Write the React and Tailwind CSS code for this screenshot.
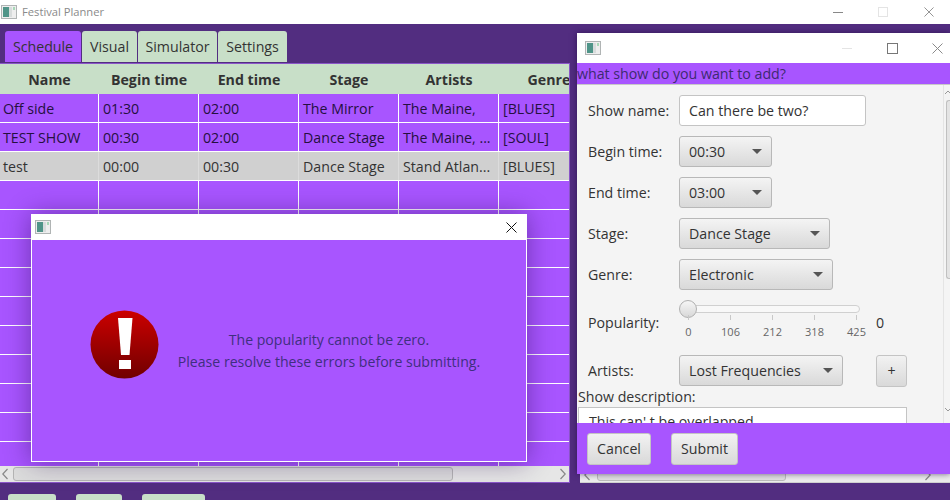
const columns = ["Name", "Begin time", "End time", "Stage", "Artists", "Genre"];

const rows = [
  ["Off side", "01:30", "02:00", "The Mirror", "The Maine,", "[BLUES]"],
  ["TEST SHOW", "00:30", "02:00", "Dance Stage", "The Maine, ...", "[SOUL]"],
  ["test", "00:00", "00:30", "Dance Stage", "Stand Atlan...", "[BLUES]"],
  ...Array.from({ length: 10 }, () => ["", "", "", "", "", ""]),
];

const tabs = [
  { label: "Schedule", width: "w-[76px]", active: true },
  { label: "Visual", width: "w-[55px]" },
  { label: "Simulator", width: "w-[79px]" },
  { label: "Settings", width: "w-[69px]" },
];

const AppIcon = () => (
  <svg width="16" height="14" viewBox="0 0 16 14" className="shrink-0">
    <rect x="0.5" y="0.5" width="15" height="13" fill="#eeeeee" stroke="#b0b4b4" />
    <rect x="2" y="2" width="6" height="10" fill="#4f9488" />
    <rect x="8" y="2" width="3" height="10" fill="#d8dcdc" />
    <rect x="12" y="2" width="2" height="3" fill="#a8d8b8" />
  </svg>
);

const CloseIcon = ({ color = "#8a8a8a", size = 11 }) => (
  <svg width={size} height={size} viewBox="0 0 11 11" fill="none" stroke={color} strokeWidth="1">
    <path d="M0.5 0.5 10.5 10.5M10.5 0.5 0.5 10.5" />
  </svg>
);

const Arrow = () => (
  <svg width="10" height="5" viewBox="0 0 10 5" className="shrink-0">
    <path d="M0 0h10L5 5z" fill="#555555" />
  </svg>
);

const Select = ({ value, width }) => (
  <div className={`${width} h-[31px] flex items-center justify-between pl-[9px] pr-[9px] border border-[#b8b8b8] rounded-[3px] bg-linear-to-b from-[#f4f4f4] to-[#d9d9d9] text-[#333333]`}>
    <span>{value}</span>
    <Arrow />
  </div>
);

const FormRow = ({ label, children }) => (
  <div className="flex items-center h-[31px]">
    <span className="w-[92px] shrink-0 pl-[1px] text-[#333333]">{label}</span>
    {children}
  </div>
);

const Chevron = ({ dir }) => (
  <svg width="6" height="12" viewBox="0 0 6 12" fill="none" stroke="#888888" strokeWidth="1.2">
    <path d={dir === "left" ? "M5.5 1 .8 6l4.7 5" : "M.5 1l4.7 5-4.7 5"} />
  </svg>
);

const Button = ({ children, width }) => (
  <div className={`${width} h-[32px] flex items-center justify-center border border-[#c4c4c4] rounded-[3px] bg-linear-to-b from-[#f2f2f2] to-[#d9d9d9] text-[#333333]`}>
    {children}
  </div>
);

const Slider = () => (
  <div className="relative w-[190px] h-[45px]">
    <div className="absolute left-[1px] top-[5px] w-[180px] h-[8px] rounded-full border border-[#d0d0d0] bg-[#f8f8f8]" />
    <div className="absolute left-0 top-0 w-[18px] h-[18px] rounded-full border border-[#b0b0b0] bg-linear-to-b from-[#f6f6f6] to-[#d8d8d8]" />
    <div className="absolute left-[9px] top-[15px] w-[169px] flex justify-between">
      {["0", "106", "212", "318", "425"].map((tick) => (
        <div key={tick} className="relative w-px h-[5px] bg-[#c8c8c8]">
          <span className="absolute top-[10px] left-1/2 -translate-x-1/2 text-[11px] leading-[14px] text-[#666666]">{tick}</span>
        </div>
      ))}
    </div>
    <span className="absolute left-[197px] top-[12px] text-[#333333]">0</span>
  </div>
);

const ScheduleTable = () => (
  <div className="relative h-[403px] w-[570px] shrink-0 overflow-hidden border-t border-r border-[#8a55c8] bg-[#a855ff]">
    <div className="flex w-[600px] h-[30px] bg-[#c8dfc8]">
      {columns.map((col, j) => (
        <div key={col} className={`${j === 0 ? "w-[99px]" : "w-[100px]"} pt-[1px] flex items-center justify-center font-bold text-[#333333]`}>{col}</div>
      ))}
    </div>
    {rows.map((row, i) => (
      <div key={i} className={`flex w-[600px] h-[29px] border-b border-white ${i === 2 ? "bg-[#d0d0d0] text-[#333333]" : "text-[#25103f]"}`}>
        {row.map((cell, j) => (
          <div key={j} className={`${j === 0 ? "w-[99px] pl-[3px]" : "w-[100px] pl-[4px]"} pt-[1px] flex items-center whitespace-nowrap border-r ${i === 2 ? "border-[#dcdcdc]" : "border-white"}`}>{cell}</div>
        ))}
      </div>
    ))}
  </div>
);

const HScroll = () => (
  <div className="h-[17px] w-[570px] shrink-0 flex items-center bg-[#e6e6e6] border-r border-b border-[#8a55c8] pr-[3px] pl-[2px]">
    <Chevron dir="left" />
    <div className="ml-[5px] w-[440px] h-[14px] rounded-[3px] border border-[#b4b4b4] bg-[#dcdcdc]" />
    <div className="flex-1" />
    <Chevron dir="right" />
  </div>
);

const ErrorIcon = () => (
  <svg width="69" height="69" viewBox="0 0 69 69" className="shrink-0">
    <defs>
      <linearGradient id="err" x1="0" y1="0" x2="0" y2="1">
        <stop offset="0" stopColor="#cc0000" />
        <stop offset="1" stopColor="#700000" />
      </linearGradient>
    </defs>
    <circle cx="34.5" cy="34.5" r="34" fill="url(#err)" />
    <path d="M28 8h14.500l-3 37h-8.500z" fill="#ffffff" />
    <rect x="29" y="50" width="12" height="9" fill="#ffffff" />
  </svg>
);

const ErrorDialog = () => (
  <div className="absolute left-[31px] top-[214px] w-[496px] h-[248px] flex flex-col shadow-[0_0_24px_rgba(40,10,80,0.45)]">
    <div className="h-[26px] bg-white flex items-center justify-between pl-[4px] pr-[10px]">
      <AppIcon />
      <CloseIcon color="#111111" />
    </div>
    <div className="flex-1 flex items-center pl-[58px] pr-[27px] pb-[12px] bg-[#a855ff] border border-t-0 border-white">
      <ErrorIcon />
      <div className="flex-1 pt-[12px] text-center leading-[22px] text-[14.1px] text-[#3f2f80]">
        <p>The popularity cannot be zero.</p>
        <p>Please resolve these errors before submitting.</p>
      </div>
    </div>
  </div>
);

const AddShowWindow = () => (
  <div className="absolute left-[577px] top-[33px] w-[373px] h-[441px] flex flex-col shadow-[0_0_6px_rgba(30,10,60,0.6)]">
    <div className="h-[30px] shrink-0 bg-white flex items-center pl-[8px] pr-[7px]">
      <AppIcon />
      <div className="flex-1" />
      <div className="w-[10px] h-px bg-[#e4e4e4] mr-[35px]" />
      <div className="w-[11px] h-[11px] border border-[#777777] mr-[34px]" />
      <CloseIcon size={11} />
    </div>
    <div className="h-[21px] shrink-0 bg-[#a855ff] flex items-center whitespace-nowrap text-[#3d2a70]">what show do you want to add?</div>
    <div className="relative flex-1 min-h-0 overflow-hidden bg-[#f4f4f4] border-t border-[#c8c8c8]">
      <div className="flex flex-col gap-[10px] pt-[10px] pl-[10px]">
        <FormRow label="Show name:">
          <div className="w-[187px] h-[31px] flex items-center pl-[9px] border border-[#c4c4c4] rounded-[3px] bg-white text-[#333333]">Can there be two?</div>
        </FormRow>
        <FormRow label="Begin time:"><Select value="00:30" width="w-[93px]" /></FormRow>
        <FormRow label="End time:"><Select value="03:00" width="w-[93px]" /></FormRow>
        <FormRow label="Stage:"><Select value="Dance Stage" width="w-[151px]" /></FormRow>
        <FormRow label="Genre:"><Select value="Electronic" width="w-[154px]" /></FormRow>
        <div className="flex items-center h-[45px]">
          <span className="w-[92px] shrink-0 pl-[1px] text-[#333333]">Popularity:</span>
          <Slider />
        </div>
        <div className="flex items-center h-[31px]">
          <span className="w-[92px] shrink-0 pl-[1px] text-[#333333]">Artists:</span>
          <Select value="Lost Frequencies" width="w-[164px]" />
          <div className="ml-[33px]"><Button width="w-[31px]">+</Button></div>
        </div>
      </div>
      <div className="pl-[1px] leading-[21px] text-[#333333]">Show description:</div>
      <div className="ml-[1px] w-[329px] h-[40px] pl-[10px] pt-[3px] border border-[#c4c4c4] bg-white text-[#333333]">This can' t be overlapped</div>
      {/* vertical scrollbar on the right edge of the form */}
      <div className="absolute right-0 top-0 bottom-0 w-[7px] flex flex-col items-end border-l border-[#e4e4e4]">
        <svg width="6" height="15" viewBox="0 0 6 15" fill="none" stroke="#999999" strokeWidth="1">
          <path d="M1 9l3-3 2 2" />
        </svg>
        <div className="w-[4px] h-[179px] rounded-l-[3px] border border-r-0 border-[#c0c0c0] bg-[#e4e4e4]" />
        <div className="flex-1" />
        <svg width="6" height="15" viewBox="0 0 6 15" fill="none" stroke="#999999" strokeWidth="1">
          <path d="M1 2l3 3 2-2" />
        </svg>
        <div className="h-[2px]" />
      </div>
    </div>
    <div className="h-[51px] shrink-0 bg-[#a855ff] flex items-center gap-[20px] pl-[10px]">
      <Button width="w-[64px]">Cancel</Button>
      <Button width="w-[67px]">Submit</Button>
    </div>
  </div>
);

const App = () => {
  return (
    <div className="relative w-[950px] h-[500px] overflow-hidden flex flex-col bg-[#522d80] text-[14.2px] font-['Open_Sans',sans-serif]">
      <div className="h-[24px] shrink-0 bg-white flex items-center pl-[1px] pr-[16px]">
        <AppIcon />
        <span className="ml-[5px] text-[11.2px] text-[#8a8a8a]">Festival Planner</span>
        <div className="flex-1" />
        <div className="w-[10px] h-px bg-[#888888] mr-[35px]" />
        <div className="w-[10px] h-[10px] border border-[#e4e4e4] mr-[36px]" />
        <CloseIcon size={10} />
      </div>

      <div className="flex gap-px pl-[5px] pt-[7px] h-[39px] shrink-0">
        {tabs.map((tab) => (
          <div
            key={tab.label}
            className={`${tab.width} h-[31px] flex items-center justify-center rounded-t-[3px] text-[#333333] ${tab.active ? "bg-[#a855ff]" : "bg-[#c8dfc8]"}`}
          >
            {tab.label}
          </div>
        ))}
      </div>

      <ScheduleTable />
      <HScroll />

      <div className="flex gap-[20px] pl-[8px] pt-[11px]">
        <div className="w-[48px] h-[20px] shrink-0 rounded-t-[3px] bg-[#c8dfc8]" />
        <div className="w-[46px] h-[20px] shrink-0 rounded-t-[3px] bg-[#c8dfc8]" />
        <div className="w-[63px] h-[20px] shrink-0 rounded-t-[3px] bg-[#c8dfc8]" />
      </div>

      {/* strip of the window behind the add show form */}
      <div className="absolute left-[580px] top-[460px] w-[370px] h-[23px] flex items-end pl-[4px] pr-[19px] pb-[1px] bg-[#ececec] border-b border-[#d0d0d0]">
        <Chevron dir="left" />
        <div className="ml-[7px] w-[189px] h-[14px] rounded-[3px] border border-[#bcbcbc] bg-[#e0e0e0]" />
        <div className="flex-1" />
        <Chevron dir="right" />
      </div>

      <ErrorDialog />
      <AddShowWindow />
    </div>
  );
};

export default App;
